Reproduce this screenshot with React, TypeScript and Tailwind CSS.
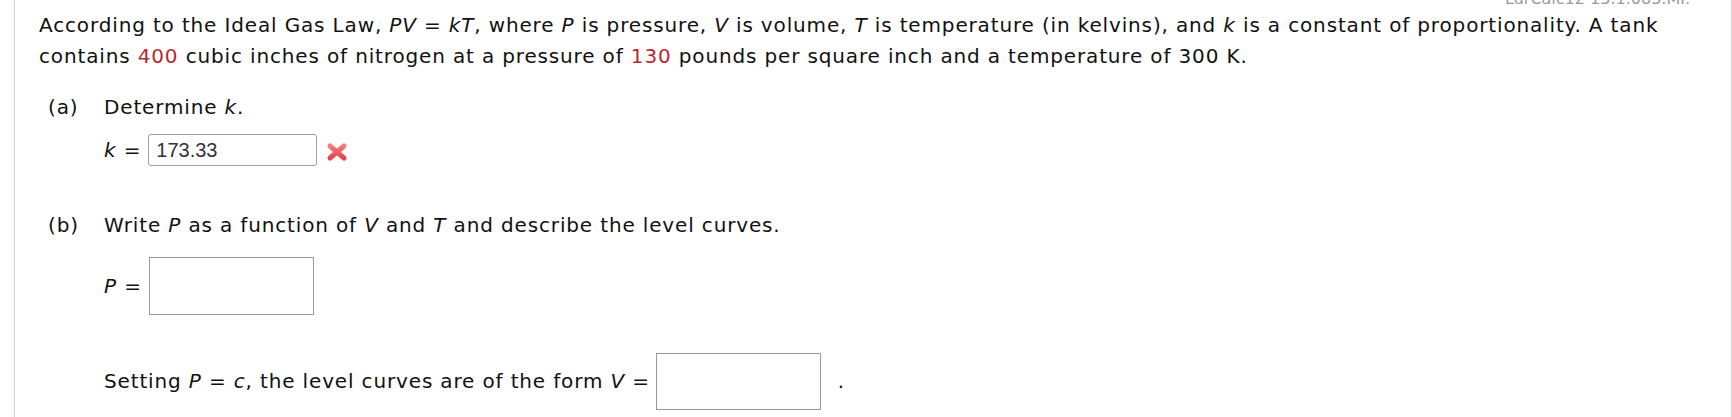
import React from 'react';

const Red: React.FC<{ children: React.ReactNode }> = ({ children }) => (
  <span className="text-[#b8282e]">{children}</span>
);

const V: React.FC<{ children: React.ReactNode }> = ({ children }) => <i>{children}</i>;

const WrongMark: React.FC = () => (
  <svg width="22" height="20" viewBox="0 0 22 20" className="ml-[9px] mt-[4px]">
    <defs>
      <linearGradient id="xg" x1="0" y1="0" x2="0" y2="1">
        <stop offset="0" stopColor="#f47a7e" />
        <stop offset="1" stopColor="#e0474d" />
      </linearGradient>
    </defs>
    <path d="M4 4 L18 16 M18 4 L4 16" stroke="url(#xg)" strokeWidth="5" strokeLinecap="round" fill="none" />
  </svg>
);

const App: React.FC = () => {
  return (
    <div className="bg-white w-[1732px] h-[417px] overflow-hidden">
      <div
        className="relative ml-[14px] w-[1718px] h-[417px] border-l border-r border-[#d0d0d0] text-[#111] text-[20px] leading-[31px] tracking-[0.85px]"
        style={{ fontFamily: '"DejaVu Sans", Verdana, sans-serif' }}
      >
        {/* problem id, cut off at the top */}
        <div className="absolute top-[-9px] right-[41px] text-[16px] leading-[16px] tracking-normal text-[#9a9a9a]">
          LarCalc12 13.1.083.MI.
        </div>

        {/* Question text */}
        <p className="pl-[24px] pr-[30px] pt-[10px]">
          According to the Ideal Gas Law, <V>PV</V> = <V>kT</V>, where <V>P</V> is pressure, <V>V</V> is volume,{' '}
          <V>T</V> is temperature (in kelvins), and <V>k</V> is a constant of proportionality. A tank contains{' '}
          <Red>400</Red> cubic inches of nitrogen at a pressure of <Red>130</Red> pounds per square inch and a
          temperature of 300 K.
        </p>

        {/* Part (a) */}
        <div className="mt-[20px] pl-[33px] flex">
          <div className="w-[56px] shrink-0">(a)</div>
          <div className="flex flex-col">
            <div>
              Determine <V>k</V>.
            </div>
            <div className="mt-[11px] flex items-center">
              <span>
                <V>k</V> =
              </span>
              <div
                className="ml-[7px] w-[169px] h-[32px] border border-[#a0a0a0] rounded-[3px] flex items-center pl-[7px] text-[20px] tracking-normal text-[#333]"
                style={{ fontFamily: '"Liberation Sans", Arial, sans-serif' }}
              >
                173.33
              </div>
              <WrongMark />
            </div>
          </div>
        </div>

        {/* Part (b) */}
        <div className="mt-[44px] pl-[33px] flex">
          <div className="w-[56px] shrink-0">(b)</div>
          <div className="flex flex-col">
            <div>
              Write <V>P</V> as a function of <V>V</V> and <V>T</V> and describe the level curves.
            </div>
            <div className="mt-[16px] flex items-center">
              <span>
                <V>P</V> =
              </span>
              <div className="ml-[7px] w-[165px] h-[58px] border border-[#999]" />
            </div>
            <div className="mt-[38px] flex items-center">
              <span>
                Setting <V>P</V> = <V>c</V>, the level curves are of the form <V>V</V> =
              </span>
              <div className="ml-[6px] w-[165px] h-[57px] border border-[#999]" />
              <span className="ml-[17px]">.</span>
            </div>
          </div>
        </div>
      </div>
    </div>
  );
};

export default App;
